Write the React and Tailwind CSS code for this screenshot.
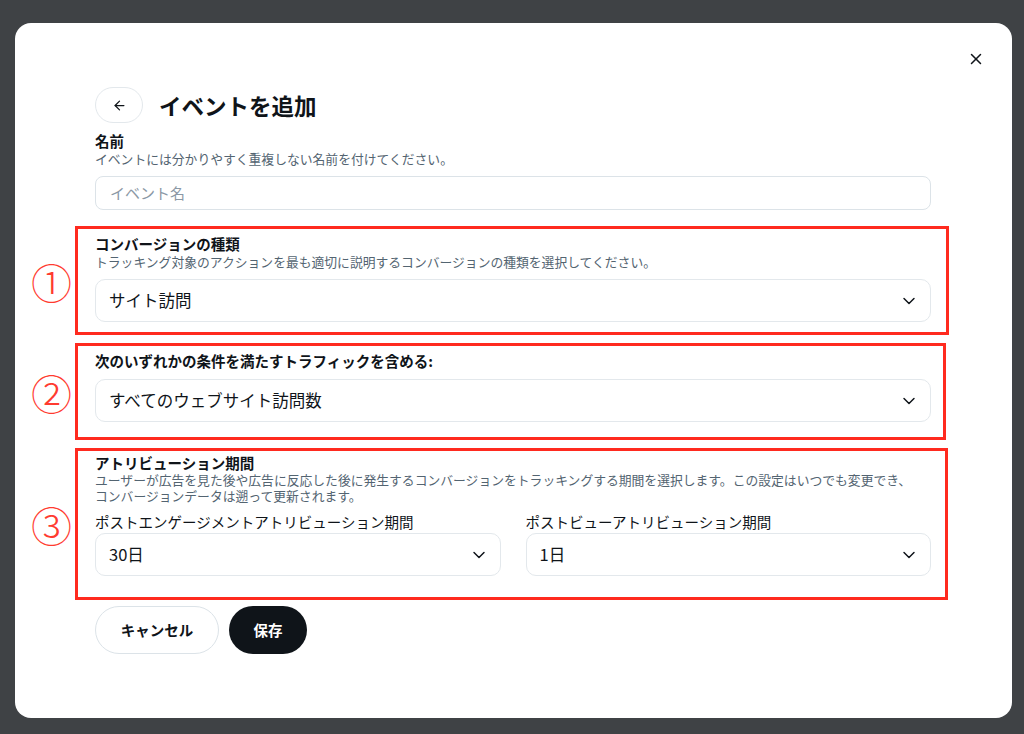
import { ArrowLeft, ChevronDown, X } from 'lucide-react';

const font = { fontFamily: '"Noto Sans CJK JP", "Noto Sans", sans-serif' };

function Select({ value }) {
    return (
        <div className="flex h-[43px] items-center justify-between rounded-[10px] border border-[#e3e8ec] bg-white pl-[13px] pr-[11px]">
            <span className="text-[16.5px] leading-none text-[#0f1419]">{value}</span>
            <ChevronDown size={20} strokeWidth={1.75} className="text-[#0f1419]" />
        </div>
    );
}

function Marked({ num, className = '', children }) {
    return (
        <div className={`relative -ml-[20px] border-[3px] border-[#ff2a1f] pl-[17px] ${className}`}>
            <span className="absolute right-full top-1/2 mr-[6px] -translate-y-1/2 text-[41px] font-light leading-none text-[#ff3b30]">
                {num}
            </span>
            {children}
        </div>
    );
}

export default function App() {
    return (
        <div className="min-h-screen bg-[#3f4245] pl-[15px] pt-[23px]" style={font}>
            <div className="relative h-[695px] w-[997px] rounded-[16px] bg-white pl-[80px] pr-[81px] pt-[64px]">
                {/* Close */}
                <button className="absolute right-[20px] top-[20px] flex h-[32px] w-[32px] items-center justify-center text-[#0f1419]">
                    <X size={18} strokeWidth={2} />
                </button>

                {/* Header */}
                <div className="flex items-center gap-[16px]">
                    <button className="flex h-[36px] w-[48px] items-center justify-center rounded-full border border-[#e3e8ec] text-[#0f1419]">
                        <ArrowLeft size={15} strokeWidth={2} />
                    </button>
                    <h1 className="text-[22.5px] font-bold leading-none text-[#0f1419]">イベントを追加</h1>
                </div>

                {/* Name */}
                <div className="mt-[9px]">
                    <p className="text-[14.5px] font-bold leading-[18px] text-[#0f1419]">名前</p>
                    <p className="text-[12.8px] leading-[18px] text-[#536471]">
                        イベントには分かりやすく重複しない名前を付けてください。
                    </p>
                    <div className="mt-[8px] flex h-[34px] items-center rounded-[8px] border border-[#dce3e8] px-[14px]">
                        <span className="text-[15px] text-[#8b98a5]">イベント名</span>
                    </div>
                </div>

                {/* 1 */}
                <Marked num="①" className="mt-[16px] -mr-[18px] pb-[10px] pr-[15px] pt-[5px]">
                    <p className="text-[14.5px] font-bold leading-[19px] text-[#0f1419]">コンバージョンの種類</p>
                    <p className="text-[12.8px] leading-[18px] text-[#536471]">
                        トラッキング対象のアクションを最も適切に説明するコンバージョンの種類を選択してください。
                    </p>
                    <div className="mt-[8px]">
                        <Select value="サイト訪問" />
                    </div>
                </Marked>

                {/* 2 */}
                <Marked num="②" className="mt-[8px] -mr-[15px] pb-[15px] pr-[12px] pt-[5px]">
                    <p className="text-[14.5px] font-bold leading-[19px] text-[#0f1419]">
                        次のいずれかの条件を満たすトラフィックを含める:
                    </p>
                    <div className="mt-[9px]">
                        <Select value="すべてのウェブサイト訪問数" />
                    </div>
                </Marked>

                {/* 3 */}
                <Marked num="③" className="mt-[8px] -mr-[17px] pb-[21px] pr-[14px] pt-[2px]">
                    <p className="text-[14.5px] font-bold leading-[19px] text-[#0f1419]">アトリビューション期間</p>
                    <p className="text-[12.8px] leading-[16px] text-[#536471]">
                        ユーザーが広告を見た後や広告に反応した後に発生するコンバージョンをトラッキングする期間を選択します。この設定はいつでも変更でき、
                        <br />
                        コンバージョンデータは遡って更新されます。
                    </p>
                    <div className="mt-[8px] grid grid-cols-2 gap-[25px]">
                        <div>
                            <p className="text-[14.5px] leading-[19px] text-[#0f1419]">
                                ポストエンゲージメントアトリビューション期間
                            </p>
                            <div className="mt-[2px]">
                                <Select value="30日" />
                            </div>
                        </div>
                        <div>
                            <p className="text-[14.5px] leading-[19px] text-[#0f1419]">ポストビューアトリビューション期間</p>
                            <div className="mt-[2px]">
                                <Select value="1日" />
                            </div>
                        </div>
                    </div>
                </Marked>

                {/* Actions */}
                <div className="mt-[6px] flex items-center gap-[10px]">
                    <button className="flex h-[48px] w-[124px] items-center justify-center rounded-full border border-[#dce3e8] text-[14.5px] font-bold text-[#0f1419]">
                        キャンセル
                    </button>
                    <button className="flex h-[48px] w-[78px] items-center justify-center rounded-full bg-[#0f1419] text-[14.5px] font-bold text-white">
                        保存
                    </button>
                </div>
            </div>
        </div>
    );
}
